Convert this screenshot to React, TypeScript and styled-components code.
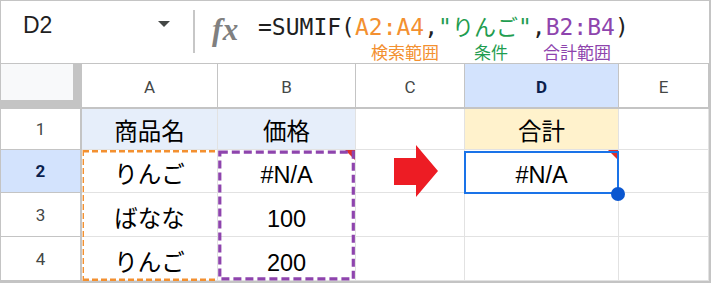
import { Fragment } from "react";
import styled, { createGlobalStyle } from "styled-components";

const GlobalStyle = createGlobalStyle`
  body {
    margin: 0;
    background: #fff;
  }
`;

const gridLine = "#e2e2e2";
const headLine = "#c4c4c4";
const orange = "#f39030";
const green = "#1f9d50";
const purple = "#8e44ad";

const Frame = styled.div`
  width: 711px;
  box-sizing: border-box;
  border: solid ${headLine};
  border-width: 1px 2px 2px 1px;
  font-family: "Liberation Sans", "Noto Sans CJK JP", sans-serif;
  color: #000;
`;

const FormulaBar = styled.div`
  height: 63px;
  box-sizing: border-box;
  border-bottom: 1px solid ${headLine};
  display: flex;
  align-items: flex-start;
`;

const NameBox = styled.div`
  width: 192px;
  box-sizing: border-box;
  padding: 11px 23px 0 22px;
  display: flex;
  justify-content: space-between;
  align-items: flex-start;
  font-size: 23px;
  line-height: 27px;
  color: #1f1f1f;
`;

const Caret = styled.span`
  margin-top: 9px;
  width: 0;
  height: 0;
  border-left: 6px solid transparent;
  border-right: 6px solid transparent;
  border-top: 6px solid #444746;
`;

const Divider = styled.div`
  width: 2px;
  height: 43px;
  margin-top: 9px;
  background: #c7c7c7;
`;

const Fx = styled.span`
  width: 29px;
  margin: 12px 0 0 17px;
  font-family: "Liberation Serif", serif;
  font-style: italic;
  font-weight: bold;
  font-size: 31px;
  line-height: 34px;
  letter-spacing: 0.5px;
  color: #808080;
`;

const FormulaArea = styled.div`
  margin-left: 17px;
  padding-top: 11px;
  display: flex;
  flex-direction: column;
`;

const Formula = styled.div`
  font-family: "DejaVu Sans Mono", "Noto Sans CJK JP", monospace;
  font-size: 23px;
  line-height: 27px;
  white-space: pre;
  color: #1f1f1f;
`;

const Part = styled.span<{ $color: string }>`
  color: ${(p) => p.$color};
`;

const Kana = styled.span`
  font-family: "Noto Sans CJK JP", sans-serif;
  font-size: 22px;
`;

const Labels = styled.div`
  margin-top: 1px;
  padding-left: 113px;
  display: flex;
  gap: 35px;
  font-family: "Noto Sans CJK JP", sans-serif;
  font-size: 17px;
  line-height: 20px;
`;

const Label = styled.span<{ $color: string }>`
  color: ${(p) => p.$color};
`;

const Sheet = styled.div`
  position: relative;
  display: grid;
  grid-template-columns: 81px 136px 138px 109px 154px 90px;
  grid-template-rows: 45px 41px 43px 44px 44px;
`;

const Corner = styled.div`
  box-sizing: border-box;
  padding: 0 9px 9px 0;
  background: ${headLine};
  &::before {
    content: "";
    display: block;
    height: 100%;
    background: #f8f9fa;
  }
`;

const ColHead = styled.div<{ $active?: boolean }>`
  box-sizing: border-box;
  border-right: 1px solid ${headLine};
  border-bottom: 2px solid ${headLine};
  display: flex;
  align-items: center;
  justify-content: center;
  padding-top: 3px;
  font-family: Roboto, "Liberation Sans", sans-serif;
  font-size: 17px;
  font-weight: ${(p) => (p.$active ? 700 : 400)};
  color: ${(p) => (p.$active ? "#0b1f4d" : "#444746")};
  background: ${(p) => (p.$active ? "#d3e3fd" : "#fff")};
`;

const RowHead = styled.div<{ $active?: boolean }>`
  box-sizing: border-box;
  border-right: 2px solid ${headLine};
  border-bottom: 1px solid ${headLine};
  display: flex;
  align-items: center;
  justify-content: center;
  font-family: Roboto, "Liberation Sans", sans-serif;
  font-size: 17px;
  font-weight: ${(p) => (p.$active ? 700 : 400)};
  color: ${(p) => (p.$active ? "#0b1f4d" : "#444746")};
  background: ${(p) => (p.$active ? "#d3e3fd" : "#fff")};
`;

const Cell = styled.div<{ $bg?: string }>`
  position: relative;
  box-sizing: border-box;
  border-right: 1px solid ${gridLine};
  border-bottom: 1px solid ${gridLine};
  display: flex;
  align-items: flex-end;
  justify-content: center;
  padding-bottom: 3px;
  font-size: 23.5px;
  line-height: 28px;
  background: ${(p) => p.$bg ?? "#fff"};
`;

const ErrorMark = styled.span`
  position: absolute;
  top: 0;
  right: 0;
  width: 0;
  height: 0;
  border-top: 10px solid #e0312a;
  border-left: 10px solid transparent;
`;

const Marquee = styled.svg`
  position: absolute;
  pointer-events: none;
  overflow: visible;
`;

const Selection = styled.div`
  position: absolute;
  left: 462.5px;
  top: 87px;
  width: 155px;
  height: 43px;
  box-sizing: border-box;
  border: 2.5px solid #1a73e8;
`;

const FillHandle = styled.span`
  position: absolute;
  right: -8.5px;
  bottom: -8.5px;
  width: 14px;
  height: 14px;
  border-radius: 50%;
  background: #0b57d0;
`;

type CellData = { text?: string; bg?: string; error?: boolean };

const blue = "#e6eefa";
const yellow = "#fff2cc";

const rows: { n: number; cells: CellData[] }[] = [
  { n: 1, cells: [{ text: "商品名", bg: blue }, { text: "価格", bg: blue }, {}, { text: "合計", bg: yellow }, {}] },
  { n: 2, cells: [{ text: "りんご" }, { text: "#N/A", error: true }, {}, { text: "#N/A", error: true }, {}] },
  { n: 3, cells: [{ text: "ばなな" }, { text: "100" }, {}, {}, {}] },
  { n: 4, cells: [{ text: "りんご" }, { text: "200" }, {}, {}, {}] },
];

export default function App() {
  return (
    <>
      <GlobalStyle />
      <Frame>
        <FormulaBar>
          <NameBox>
            D2
            <Caret />
          </NameBox>
          <Divider />
          <Fx>fx</Fx>
          <FormulaArea>
            <Formula>
              =SUMIF(<Part $color={orange}>A2:A4</Part>,
              <Part $color={green}>
                "<Kana>りんご</Kana>"
              </Part>
              ,<Part $color={purple}>B2:B4</Part>)
            </Formula>
            <Labels>
              <Label $color={orange}>検索範囲</Label>
              <Label $color={green}>条件</Label>
              <Label $color={purple}>合計範囲</Label>
            </Labels>
          </FormulaArea>
        </FormulaBar>

        <Sheet>
          <Corner />
          {["A", "B", "C", "D", "E"].map((c) => (
            <ColHead key={c} $active={c === "D"}>
              {c}
            </ColHead>
          ))}
          {rows.map((r) => (
            <Fragment key={r.n}>
              <RowHead $active={r.n === 2}>{r.n}</RowHead>
              {r.cells.map((c, i) => (
                <Cell key={i} $bg={c.bg}>
                  {c.text}
                  {c.error && <ErrorMark />}
                </Cell>
              ))}
            </Fragment>
          ))}

          <Marquee style={{ left: 81, top: 86 }} width={136} height={131}>
            <g stroke={orange} fill="none" strokeDasharray="6 3">
              <line x1={1} y1={1.3} x2={136} y2={1.3} strokeWidth={2.6} />
              <line x1={1} y1={129.7} x2={136} y2={129.7} strokeWidth={2.6} />
              <line x1={1.3} y1={0} x2={1.3} y2={131} strokeWidth={1.4} />
            </g>
          </Marquee>
          <Marquee style={{ left: 217, top: 86 }} width={137} height={131}>
            <rect x={1.8} y={2.2} width={133.5} height={126.6} fill="none" stroke={purple} strokeWidth={3.2} strokeDasharray="8 4" />
          </Marquee>

          <Marquee style={{ left: 392, top: 81 }} width={45} height={52}>
            <polygon points="1,13 23,13 23,0 45,26 23,52 23,40 1,40" fill="#ed1c24" />
          </Marquee>

          <Selection>
            <FillHandle />
          </Selection>
        </Sheet>
      </Frame>
    </>
  );
}
